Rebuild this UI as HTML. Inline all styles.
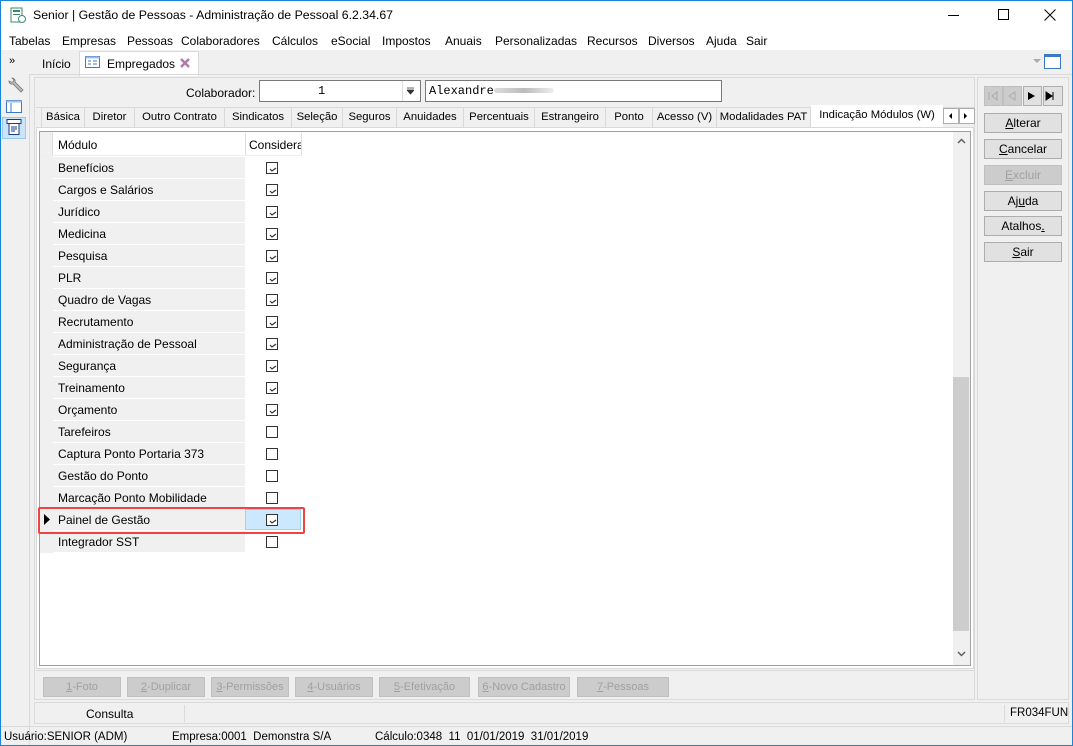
<!DOCTYPE html>
<html><head><meta charset="utf-8"><style>
*{box-sizing:border-box;margin:0;padding:0}
body{width:1073px;height:746px;overflow:hidden;background:#f0f0f0;font-family:"Liberation Sans",sans-serif;font-size:12px;color:#000;position:relative}
.a{position:absolute}
.t{white-space:nowrap}
.m{position:absolute;top:34px;white-space:nowrap;font-size:12px}
.btn{position:absolute;background:#e1e1e1;border:1px solid #adadad;text-align:center;line-height:18px;font-size:12px;white-space:nowrap;overflow:hidden}
.dis{background:#cccccc;border-color:#bfbfbf;color:#a0a0a0;font-size:11px}
.tab{position:absolute;top:108px;height:20px;border-right:1px solid #d9d9d9;line-height:19px;text-align:center;font-size:11.3px;white-space:nowrap;overflow:hidden}
.row{position:absolute;left:53px;width:192px;height:21px;background:#f0f0f0;line-height:22px;padding-left:5px;font-size:12px}
.cb{position:absolute;left:266px;width:12px;height:12px;border:1px solid #333;background:#fff}
.cb svg{position:absolute;left:1px;top:1px}
</style></head><body>
<div class="a" style="left:0;top:0;width:1073px;height:1px;background:#1883d7"></div>
<div class="a" style="left:0;top:745px;width:1073px;height:1px;background:#1883d7"></div>
<div class="a" style="left:0;top:0;width:1px;height:746px;background:#1883d7"></div>
<div class="a" style="left:1072px;top:0;width:1px;height:746px;background:#1883d7"></div>
<div class="a" style="left:1px;top:1px;width:1071px;height:49px;background:#fff"></div>
<svg class="a" style="left:10px;top:7px" width="16" height="16"><rect x="1" y="1" width="11" height="14" fill="#fff" stroke="#3a8a6a"/><rect x="3" y="3" width="7" height="2" fill="#3a8a6a"/><rect x="3" y="7" width="7" height="1" fill="#3a8a6a"/><circle cx="12" cy="12" r="3.5" fill="#fff" stroke="#3a8a6a"/></svg>
<div class="a t" style="left:33px;top:8px;font-size:12.3px">Senior | Gestão de Pessoas - Administração de Pessoal 6.2.34.67</div>
<div class="a" style="left:948px;top:15px;width:11px;height:1px;background:#000"></div>
<div class="a" style="left:998px;top:9px;width:11px;height:11px;border:1px solid #000"></div>
<svg class="a" style="left:1044px;top:9px" width="12" height="12"><path d="M0.5 0.5L11.5 11.5M11.5 0.5L0.5 11.5" stroke="#000"/></svg>
<div class="m" style="left:9px">Tabelas</div>
<div class="m" style="left:62px">Empresas</div>
<div class="m" style="left:127px">Pessoas</div>
<div class="m" style="left:181px">Colaboradores</div>
<div class="m" style="left:272px">Cálculos</div>
<div class="m" style="left:331px">eSocial</div>
<div class="m" style="left:382px">Impostos</div>
<div class="m" style="left:445px">Anuais</div>
<div class="m" style="left:495px">Personalizadas</div>
<div class="m" style="left:587px">Recursos</div>
<div class="m" style="left:648px">Diversos</div>
<div class="m" style="left:706px">Ajuda</div>
<div class="m" style="left:746px">Sair</div>
<div class="a t" style="left:9px;top:55px;font-size:11px">»</div>
<div class="a t" style="left:42px;top:57px">Início</div>
<div class="a" style="left:79px;top:51px;width:120px;height:25px;background:#fff;border:1px solid #d9d9d9;border-bottom:none"></div>
<svg class="a" style="left:85px;top:56px" width="15" height="12"><rect x="0.5" y="0.5" width="14" height="11" fill="#fff" stroke="#3b78c4"/><rect x="0.5" y="0.5" width="14" height="2" fill="#9fc0e8"/><path d="M3 5h3M3 8h3M8 5h4M8 8h4" stroke="#3b78c4"/></svg>
<div class="a t" style="left:107px;top:57px">Empregados</div>
<svg class="a" style="left:180px;top:58px" width="10" height="10"><path d="M1 1L9 9M9 1L1 9" stroke="#b07aa8" stroke-width="2.5"/></svg>
<svg class="a" style="left:1032px;top:58px" width="10" height="6"><path d="M1 1h8L5 5z" fill="#aaa"/></svg>
<div class="a" style="left:1044px;top:54px;width:17px;height:15px;border:1px solid #3b78c4;border-top:3px solid #3b78c4;background:#fff"></div>
<div class="a" style="left:30px;top:74px;width:1042px;height:1px;background:#d9d9d9"></div>
<svg class="a" style="left:6px;top:77px" width="18" height="18"><path d="M3 4a3 3 0 0 0 4 3l8 8 2-2-8-8a3 3 0 0 0-3-4l2 2-1 2-2 0z" fill="#bbb" stroke="#777" stroke-width="0.8"/></svg>
<svg class="a" style="left:6px;top:100px" width="16" height="13"><rect x="0.5" y="0.5" width="15" height="12" fill="#fff" stroke="#3b78c4"/><rect x="0.5" y="0.5" width="15" height="2" fill="#9fc0e8"/><path d="M5 3v9" stroke="#3b78c4"/></svg>
<div class="a" style="left:2px;top:117px;width:24px;height:22px;background:#cce4f7;border:1px solid #99c9ef"></div>
<svg class="a" style="left:6px;top:119px" width="16" height="17"><rect x="1" y="0.5" width="14" height="4" fill="#fff" stroke="#1a3a8a"/><rect x="3" y="4.5" width="10" height="11" fill="#fff" stroke="#1a3a8a"/><path d="M5 8h6M5 10h6M5 12h4" stroke="#1a3a8a"/></svg>
<div class="a" style="left:29px;top:74px;width:1px;height:671px;background:#d9d9d9"></div>
<div class="a" style="left:34px;top:77px;width:941px;height:623px;border:1px solid #dadada"></div>
<div class="a t" style="left:186px;top:86px">Colaborador:</div>
<div class="a" style="left:259px;top:80px;width:162px;height:22px;background:#fff;border:1px solid #7a7a7a"></div>
<div class="a t" style="left:318px;top:84px;font-family:'Liberation Mono',monospace;font-size:12px">1</div>
<div class="a" style="left:402px;top:81px;width:1px;height:20px;background:#ddd"></div>
<svg class="a" style="left:407px;top:87px" width="7" height="8"><path d="M0 1h7M0 3h7L3.5 7z" stroke="#333" fill="#333" stroke-width="0.8"/></svg>
<div class="a" style="left:425px;top:80px;width:297px;height:22px;background:#fff;border:1px solid #7a7a7a"></div>
<div class="a t" style="left:429px;top:84px;font-family:'Liberation Mono',monospace;font-size:12px">Alexandre</div>
<div class="a" style="left:494px;top:88px;width:60px;height:5px;background:linear-gradient(90deg,#ddd,#bbb,#eee);border-radius:3px"></div>
<div class="a" style="left:36px;top:107px;width:938px;height:1px;background:#d9d9d9"></div>
<div class="tab" style="left:41px;width:44px;border-left:1px solid #d9d9d9">Básica</div>
<div class="tab" style="left:85px;width:50px">Diretor</div>
<div class="tab" style="left:135px;width:90px">Outro Contrato</div>
<div class="tab" style="left:225px;width:67px">Sindicatos</div>
<div class="tab" style="left:292px;width:51px">Seleção</div>
<div class="tab" style="left:343px;width:54px">Seguros</div>
<div class="tab" style="left:397px;width:67px">Anuidades</div>
<div class="tab" style="left:464px;width:71px">Percentuais</div>
<div class="tab" style="left:535px;width:71px">Estrangeiro</div>
<div class="tab" style="left:606px;width:47px">Ponto</div>
<div class="tab" style="left:653px;width:64px">Acesso (V)</div>
<div class="tab" style="left:717px;width:94px">Modalidades PAT</div>
<div class="a t" style="left:811px;top:105px;width:132px;height:24px;background:#fff;line-height:20px;text-align:center;font-size:11.3px">Indicação Módulos (W)</div>
<div class="a" style="left:943px;top:108px;width:16px;height:16px;border:1px solid #adadad;background:#fff"></div>
<div class="a" style="left:959px;top:108px;width:16px;height:16px;border:1px solid #adadad;background:#fff"></div>
<svg class="a" style="left:948px;top:113px" width="20" height="6"><path d="M4 0v6L1 3z" fill="#000"/><path d="M16 0v6l3-3z" fill="#000"/></svg>
<div class="a" style="left:36px;top:127px;width:938px;height:542px;background:#fff;border:1px solid #d9d9d9"></div>
<div class="a" style="left:39px;top:131px;width:932px;height:535px;background:#fff;border:1px solid #a0a0a0"></div>
<div class="a" style="left:40px;top:132px;width:13px;height:421px;background:#f0f0f0"></div>
<div class="a" style="left:52px;top:133px;width:1px;height:22px;background:#ddd"></div>
<div class="a t" style="left:58px;top:138px">Módulo</div>
<div class="a" style="left:245px;top:133px;width:1px;height:22px;background:#ddd"></div>
<div class="a t" style="left:249px;top:138px;width:52px;overflow:hidden">Considera</div>
<div class="a" style="left:301px;top:133px;width:1px;height:22px;background:#ddd"></div>
<div class="a" style="left:40px;top:155px;width:262px;height:1px;background:#eee"></div>
<div class="row" style="top:157px">Benefícios</div>
<div class="row" style="top:179px">Cargos e Salários</div>
<div class="row" style="top:201px">Jurídico</div>
<div class="row" style="top:223px">Medicina</div>
<div class="row" style="top:245px">Pesquisa</div>
<div class="row" style="top:267px">PLR</div>
<div class="row" style="top:289px">Quadro de Vagas</div>
<div class="row" style="top:311px">Recrutamento</div>
<div class="row" style="top:333px">Administração de Pessoal</div>
<div class="row" style="top:355px">Segurança</div>
<div class="row" style="top:377px">Treinamento</div>
<div class="row" style="top:399px">Orçamento</div>
<div class="row" style="top:421px">Tarefeiros</div>
<div class="row" style="top:443px">Captura Ponto Portaria 373</div>
<div class="row" style="top:465px">Gestão do Ponto</div>
<div class="row" style="top:487px">Marcação Ponto Mobilidade</div>
<div class="row" style="top:509px">Painel de Gestão</div>
<div class="row" style="top:531px">Integrador SST</div>
<div class="a" style="left:245px;top:509px;width:56px;height:21px;background:#cce8ff;border:1px solid #99d1ff"></div>
<svg class="a" style="left:44px;top:514px" width="6" height="11"><path d="M0 0l6 5.5L0 11z" fill="#000"/></svg>
<div class="a" style="left:38px;top:507px;width:267px;height:27px;border:2px solid #ee4444;border-radius:2px"></div>
<div class="cb" style="top:162px"><svg width="10" height="10"><path d="M2 5l2 2 4-3" stroke="#333" fill="none" stroke-width="1.2"/></svg></div>
<div class="cb" style="top:184px"><svg width="10" height="10"><path d="M2 5l2 2 4-3" stroke="#333" fill="none" stroke-width="1.2"/></svg></div>
<div class="cb" style="top:206px"><svg width="10" height="10"><path d="M2 5l2 2 4-3" stroke="#333" fill="none" stroke-width="1.2"/></svg></div>
<div class="cb" style="top:228px"><svg width="10" height="10"><path d="M2 5l2 2 4-3" stroke="#333" fill="none" stroke-width="1.2"/></svg></div>
<div class="cb" style="top:250px"><svg width="10" height="10"><path d="M2 5l2 2 4-3" stroke="#333" fill="none" stroke-width="1.2"/></svg></div>
<div class="cb" style="top:272px"><svg width="10" height="10"><path d="M2 5l2 2 4-3" stroke="#333" fill="none" stroke-width="1.2"/></svg></div>
<div class="cb" style="top:294px"><svg width="10" height="10"><path d="M2 5l2 2 4-3" stroke="#333" fill="none" stroke-width="1.2"/></svg></div>
<div class="cb" style="top:316px"><svg width="10" height="10"><path d="M2 5l2 2 4-3" stroke="#333" fill="none" stroke-width="1.2"/></svg></div>
<div class="cb" style="top:338px"><svg width="10" height="10"><path d="M2 5l2 2 4-3" stroke="#333" fill="none" stroke-width="1.2"/></svg></div>
<div class="cb" style="top:360px"><svg width="10" height="10"><path d="M2 5l2 2 4-3" stroke="#333" fill="none" stroke-width="1.2"/></svg></div>
<div class="cb" style="top:382px"><svg width="10" height="10"><path d="M2 5l2 2 4-3" stroke="#333" fill="none" stroke-width="1.2"/></svg></div>
<div class="cb" style="top:404px"><svg width="10" height="10"><path d="M2 5l2 2 4-3" stroke="#333" fill="none" stroke-width="1.2"/></svg></div>
<div class="cb" style="top:426px"></div>
<div class="cb" style="top:448px"></div>
<div class="cb" style="top:470px"></div>
<div class="cb" style="top:492px"></div>
<div class="cb" style="top:514px"><svg width="10" height="10"><path d="M2 5l2 2 4-3" stroke="#333" fill="none" stroke-width="1.2"/></svg></div>
<div class="cb" style="top:536px"></div>
<div class="a" style="left:953px;top:132px;width:17px;height:533px;background:#f0f0f0"></div>
<div class="a" style="left:953px;top:377px;width:16px;height:254px;background:#cdcdcd"></div>
<svg class="a" style="left:957px;top:138px" width="9" height="6"><path d="M1 5l3.5-3.5L8 5" stroke="#606060" fill="none" stroke-width="1.5"/></svg>
<svg class="a" style="left:957px;top:651px" width="9" height="6"><path d="M1 1l3.5 3.5L8 1" stroke="#606060" fill="none" stroke-width="1.5"/></svg>
<div class="a" style="left:36px;top:670px;width:938px;height:1px;background:#dadada"></div>
<div class="btn dis" style="left:43px;top:677px;width:78px;height:20px"><u>1</u>-Foto</div>
<div class="btn dis" style="left:127px;top:677px;width:78px;height:20px"><u>2</u>-Duplicar</div>
<div class="btn dis" style="left:211px;top:677px;width:78px;height:20px"><u>3</u>-Permissões</div>
<div class="btn dis" style="left:295px;top:677px;width:78px;height:20px"><u>4</u>-Usuários</div>
<div class="btn dis" style="left:379px;top:677px;width:91px;height:20px"><u>5</u>-Efetivação</div>
<div class="btn dis" style="left:478px;top:677px;width:92px;height:20px"><u>6</u>-Novo Cadastro</div>
<div class="btn dis" style="left:577px;top:677px;width:92px;height:20px"><u>7</u>-Pessoas</div>
<div class="a" style="left:977px;top:77px;width:92px;height:623px;border:1px solid #dadada"></div>
<div class="btn dis" style="left:984px;top:86px;width:19px;height:20px"></div>
<div class="btn dis" style="left:1003px;top:86px;width:19px;height:20px"></div>
<div class="btn" style="left:1023px;top:86px;width:19px;height:20px"></div>
<div class="btn" style="left:1043px;top:86px;width:20px;height:20px"></div>
<svg class="a" style="left:988px;top:91px" width="75" height="10"><path d="M1 1v8M9 1L4 5l5 4z" stroke="#aaa" fill="none"/><path d="M27 1l-6 4 6 4z" stroke="#aaa" fill="none"/><path d="M40 1l7 4-7 4z" fill="#000"/><path d="M58 1l6 4-6 4zM65 1v8" fill="#000" stroke="#000"/></svg>
<div class="btn" style="left:984px;top:113px;width:78px;height:20px"><u>A</u>lterar</div>
<div class="btn" style="left:984px;top:139px;width:78px;height:20px"><u>C</u>ancelar</div>
<div class="btn dis" style="left:984px;top:165px;width:78px;height:20px;font-size:12px"><u>E</u>xcluir</div>
<div class="btn" style="left:984px;top:191px;width:78px;height:20px">Aj<u>u</u>da</div>
<div class="btn" style="left:984px;top:216px;width:78px;height:20px">Atalhos<u>.</u></div>
<div class="btn" style="left:984px;top:242px;width:78px;height:20px"><u>S</u>air</div>
<div class="a" style="left:34px;top:702px;width:1035px;height:22px;border:1px solid #dadada"></div>
<div class="a" style="left:184px;top:705px;width:1px;height:17px;background:#dadada"></div>
<div class="a" style="left:1004px;top:705px;width:1px;height:17px;background:#dadada"></div>
<div class="a t" style="left:86px;top:707px">Consulta</div>
<div class="a t" style="left:1010px;top:707px;font-size:11.5px">FR034FUN</div>
<div class="a" style="left:1px;top:726px;width:1071px;height:1px;background:#dadada"></div>
<div class="a t" style="left:4px;top:731px;font-size:11.5px">Usuário:SENIOR (ADM)</div>
<div class="a t" style="left:172px;top:731px;font-size:11.5px">Empresa:0001&nbsp; Demonstra S/A</div>
<div class="a t" style="left:375px;top:731px;font-size:11.5px">Cálculo:0348&nbsp; 11&nbsp; 01/01/2019&nbsp; 31/01/2019</div>
</body></html>
